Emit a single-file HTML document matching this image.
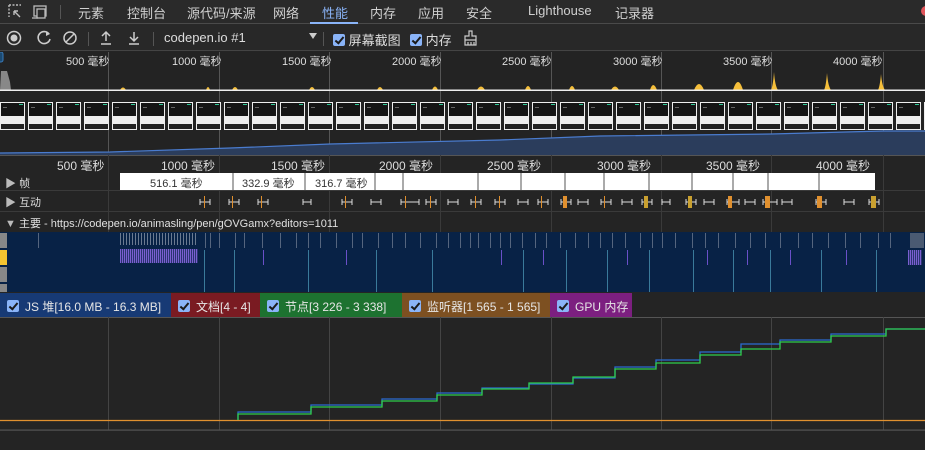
<!DOCTYPE html>
<html><head><meta charset="utf-8"><style>
*{margin:0;padding:0;box-sizing:border-box}
body{width:925px;height:450px;overflow:hidden;background:#242424;font-family:"Liberation Sans","Noto Sans CJK SC",sans-serif;color:#cfcfcf;position:relative}
.a{position:absolute}
.tabs{left:0;top:0;width:925px;height:24px;background:#2a2a2a;border-bottom:1px solid #4a4a4a}
.tab{top:3px;font-size:13px;color:#d0d0d0}
.tb{left:0;top:24px;width:925px;height:27px;background:#282828;border-bottom:1px solid #444}
.cb{display:inline-block;width:12px;height:12px;background:#8ab4f8;border-radius:2px;position:relative;vertical-align:-1px}
.cb:after{content:"";position:absolute;left:3.5px;top:1px;width:3px;height:7px;border:solid #1a1a1a;border-width:0 2px 2px 0;transform:rotate(40deg)}
.lbl{font-size:11px;color:#ddd;top:53px}
.rl{font-size:12px;color:#ddd;top:157px}
.leg{top:293px;height:24px;font-size:12px;color:#e6e6e6;padding:5px 0 0 7px;white-space:nowrap}
.leg .cb{margin-right:6px}
</style></head><body>
<div class="a tabs"></div>
<svg class="a" style="left:8px;top:4px" width="40" height="16" viewBox="0 0 40 16"><path d="M1 1h12M1 1v12M1 5v0" stroke="#bbb" stroke-width="1.4" stroke-dasharray="2 1.5" fill="none"/><path d="M6 7l6 6M6 7h4M6 7v4" stroke="#bbb" stroke-width="1.4" fill="none"/><rect x="26" y="2" width="12" height="10" fill="none" stroke="#bbb" stroke-width="1.3"/><rect x="29" y="5" width="8" height="9" fill="#2a2a2a" stroke="#bbb" stroke-width="1.3"/><path d="M24 14h6" stroke="#bbb" stroke-width="1.3"/></svg>
<div class="a" style="left:60px;top:5px;width:1px;height:14px;background:#555"></div>
<div class="a tab" style="left:78px">元素</div>
<div class="a tab" style="left:127px">控制台</div>
<div class="a tab" style="left:187px">源代码/来源</div>
<div class="a tab" style="left:273px">网络</div>
<div class="a tab" style="left:322px;color:#8ab4f8">性能</div>
<div class="a" style="left:310px;top:22px;width:48px;height:2px;background:#8ab4f8"></div>
<div class="a tab" style="left:370px">内存</div>
<div class="a tab" style="left:418px">应用</div>
<div class="a tab" style="left:466px">安全</div>
<div class="a tab" style="left:528px">Lighthouse</div>
<div class="a tab" style="left:615px">记录器</div>
<div class="a" style="left:921px;top:6px;width:10px;height:10px;border-radius:5px;background:#e0555b"></div>
<div class="a tb"></div>
<svg class="a" style="left:5px;top:29px" width="140" height="18" viewBox="0 0 140 18"><circle cx="9" cy="9" r="6.5" fill="none" stroke="#ccc" stroke-width="1.5"/><circle cx="9" cy="9" r="3.5" fill="#ccc"/><path d="M44 5A6 6 0 1 0 45 10" fill="none" stroke="#ccc" stroke-width="1.6"/><path d="M41 2l4 3-4 2z" fill="#ccc"/><circle cx="65" cy="9" r="6" fill="none" stroke="#ccc" stroke-width="1.5"/><path d="M61 13l8-8" stroke="#ccc" stroke-width="1.5"/><path d="M101 3v9M97 7l4-4 4 4M96 15h10" stroke="#ccc" stroke-width="1.5" fill="none"/><path d="M129 3v9M125 8l4 4 4-4M124 15h10" stroke="#ccc" stroke-width="1.5" fill="none"/></svg>
<div class="a" style="left:88px;top:32px;width:1px;height:14px;background:#555"></div>
<div class="a" style="left:153px;top:32px;width:1px;height:14px;background:#555"></div>
<div class="a" style="left:164px;top:30px;font-size:13px;color:#ddd">codepen.io #1</div>
<div class="a" style="left:309px;top:33px;width:0;height:0;border-left:4px solid transparent;border-right:4px solid transparent;border-top:6px solid #ccc"></div>
<div class="a" style="left:323px;top:32px;width:1px;height:14px;background:#555"></div>
<div class="a" style="left:333px;top:30px;font-size:13px;color:#ddd"><span class="cb"></span> 屏幕截图</div>
<div class="a" style="left:410px;top:30px;font-size:13px;color:#ddd"><span class="cb"></span> 内存</div>
<svg class="a" style="left:463px;top:30px" width="16" height="16" viewBox="0 0 16 16"><path d="M6 1h3v5h4v4H2V6h4zM2 10v5h11v-5M5 12v3M8 12v3M11 12v3" fill="none" stroke="#ccc" stroke-width="1.2"/></svg>
<!-- overview -->
<svg class="a" style="left:0;top:52px" width="925" height="103">
<defs><pattern id="film" x="-1" y="50" width="28" height="29" patternUnits="userSpaceOnUse"><rect x="1" y="0" width="25" height="28" fill="#eee"/><rect x="2" y="1" width="23" height="13" fill="#151515"/><rect x="2" y="22" width="23" height="5" fill="#222"/><rect x="20" y="2" width="4" height="1" fill="#3c9"/><rect x="4" y="5" width="4" height="1" fill="#666"/></pattern></defs>
<rect width="925" height="103" fill="#232323"/>
<g stroke="#555" stroke-width="1"><path d="M108.5 0V103M219.5 0V103M329.5 0V103M440.5 0V103M551.5 0V103M661.5 0V103M771.5 0V103M883.5 0V103"/></g>
<rect x="-4" y="0" width="7" height="10" rx="2" fill="#1b4a72" stroke="#3a7ab8"/>
<path d="M0 38L1 19 7 19 10 30 11 38z" fill="#888"/>
<g fill="#f4be3a"><path d="M120 38q3-5 6 0z"/><path d="M206 38q2-6 4 0z"/><path d="M232 38q3-6 6 0z"/><path d="M309 38q3-6 6 0z"/><path d="M377 38q3-6 6 0z"/><path d="M432 38q3-7 6 0z"/><path d="M477 38q4-7 8 0z"/><path d="M525 38q3-8 6 0z"/><path d="M569 38q3-8 6 0z"/><path d="M611 38q4-7 8 0z"/><path d="M650 38q3-10 7 0z"/><path d="M694 38q5-12 10 0z"/><path d="M733 38q5-16 10 0z"/><path d="M771 38q2-4 3-18q1 14 4 18z"/><path d="M824 38q2-4 3-17q1 13 4 17z"/><path d="M878 38q2-4 3-16q1 12 4 16z"/></g>
<rect x="0" y="37.5" width="925" height="1.5" fill="#eee"/>
<rect x="0" y="50" width="925" height="29" fill="url(#film)"/>
<path d="M0 103V101L110 100 230 96 330 92 500 88 600 84 771 82 883 79 925 79V103z" fill="#2b3d5c"/>
<path d="M0 101L110 100 230 96 330 92 500 88 600 84 771 82 883 79 925 79" fill="none" stroke="#4a7ccf" stroke-width="1.2"/>
</svg>
<div class="a lbl" style="left:66px">500 毫秒</div>
<div class="a lbl" style="left:172px">1000 毫秒</div>
<div class="a lbl" style="left:282px">1500 毫秒</div>
<div class="a lbl" style="left:392px">2000 毫秒</div>
<div class="a lbl" style="left:502px">2500 毫秒</div>
<div class="a lbl" style="left:613px">3000 毫秒</div>
<div class="a lbl" style="left:723px">3500 毫秒</div>
<div class="a lbl" style="left:833px">4000 毫秒</div>
<!-- details -->
<svg class="a" style="left:0;top:155px" width="925" height="138">
<defs><pattern id="bars" width="3" height="12" patternUnits="userSpaceOnUse"><rect width="1" height="12" fill="#6b7a90"/></pattern><pattern id="pbars" width="2" height="14" patternUnits="userSpaceOnUse"><rect width="1.3" height="14" fill="#7a5fd0"/></pattern></defs>
<rect width="925" height="138" fill="#242424"/>
<rect y="0" width="925" height="1" fill="#555"/>
<g stroke="#3a3a3a"><path d="M108.5 0V77M219.5 0V77M329.5 0V77M440.5 0V77M551.5 0V77M661.5 0V77M771.5 0V77M883.5 0V77"/></g>
<rect x="120" y="18" width="755" height="17" fill="#fff"/>
<g stroke="#555"><path d="M233 18v17M305 18v17M375 18v17M403 18v17M478 18v17M521 18v17M565 18v17M604 18v17M649 18v17M692 18v17M733 18v17M768 18v17M819 18v17"/></g>
<rect y="35" width="925" height="1" fill="#3a3a3a"/>
<rect y="56" width="925" height="1" fill="#3a3a3a"/>
<rect y="77" width="925" height="1" fill="#3a3a3a"/>
<g stroke="#ddd" stroke-width="1"><path d="M200 47h10M200 44v6M210 44v6M229 47h10M229 44v6M239 44v6M258 47h10M258 44v6M268 44v6M303 47h8M303 44v6M311 44v6M342 47h10M342 44v6M352 44v6M371 47h10M371 44v6M381 44v6M401 47h18M401 44v6M419 44v6M426 47h10M426 44v6M436 44v6M448 47h10M448 44v6M458 44v6M471 47h10M471 44v6M481 44v6M495 47h10M495 44v6M505 44v6M518 47h10M518 44v6M528 44v6M538 47h10M538 44v6M548 44v6M561 47h10M561 44v6M571 44v6M578 47h10M578 44v6M588 44v6M601 47h10M601 44v6M611 44v6M622 47h10M622 44v6M632 44v6M642 47h10M642 44v6M652 44v6M662 47h8M662 44v6M670 44v6M686 47h10M686 44v6M696 44v6M704 47h10M704 44v6M714 44v6M727 47h12M727 44v6M739 44v6M745 47h10M745 44v6M755 44v6M763 47h14M763 44v6M777 44v6M782 47h10M782 44v6M792 44v6M816 47h10M816 44v6M826 44v6M844 47h10M844 44v6M854 44v6M869 47h10M869 44v6M879 44v6"/></g>
<g fill="#e0902f"><rect x="204" y="41" width="1" height="12"/><rect x="232" y="41" width="1" height="12"/><rect x="261" y="41" width="1" height="12"/><rect x="345" y="41" width="1" height="12"/><rect x="405" y="41" width="1" height="12"/><rect x="430" y="41" width="1" height="12"/><rect x="475" y="41" width="1" height="12"/><rect x="499" y="41" width="1" height="12"/><rect x="541" y="41" width="1" height="12"/><rect x="563" y="41" width="4" height="12"/><rect x="604" y="41" width="1" height="12"/><rect x="644" y="41" width="4" height="12" fill="#c9a030"/><rect x="688" y="41" width="4" height="12" fill="#c9a030"/><rect x="728" y="41" width="4" height="12"/><rect x="765" y="41" width="5" height="12"/><rect x="817" y="41" width="5" height="12"/><rect x="871" y="41" width="5" height="12" fill="#c9a030"/></g>
<rect x="0" y="77" width="925" height="60" fill="#082246"/>
<rect x="0" y="78" width="7" height="15" fill="#888"/><rect x="0" y="95" width="7" height="15" fill="#f4c430"/><rect x="0" y="112" width="7" height="15" fill="#888"/><rect x="0" y="129" width="7" height="8" fill="#888"/>
<rect x="120" y="78" width="78" height="12" fill="url(#bars)"/>
<rect x="120" y="94" width="78" height="14" fill="url(#pbars)"/>
<g fill="#55657e"><rect x="38" y="78" width="1" height="15"/><rect x="205" y="78" width="1" height="15"/><rect x="210" y="78" width="1" height="15"/><rect x="219" y="78" width="1" height="15"/><rect x="235" y="78" width="1" height="15"/><rect x="244" y="78" width="1" height="15"/><rect x="262" y="78" width="1" height="15"/><rect x="280" y="78" width="1" height="15"/><rect x="296" y="78" width="1" height="15"/><rect x="308" y="78" width="1" height="15"/><rect x="320" y="78" width="1" height="15"/><rect x="336" y="78" width="1" height="15"/><rect x="352" y="78" width="1" height="15"/><rect x="362" y="78" width="1" height="15"/><rect x="378" y="78" width="1" height="15"/><rect x="392" y="78" width="1" height="15"/><rect x="405" y="78" width="1" height="15"/><rect x="420" y="78" width="1" height="15"/><rect x="436" y="78" width="1" height="15"/><rect x="448" y="78" width="1" height="15"/><rect x="460" y="78" width="1" height="15"/><rect x="470" y="78" width="1" height="15"/><rect x="478" y="78" width="1" height="15"/><rect x="490" y="78" width="1" height="15"/><rect x="500" y="78" width="1" height="15"/><rect x="510" y="78" width="1" height="15"/><rect x="522" y="78" width="1" height="15"/><rect x="535" y="78" width="1" height="15"/><rect x="546" y="78" width="1" height="15"/><rect x="560" y="78" width="1" height="15"/><rect x="575" y="78" width="1" height="15"/><rect x="588" y="78" width="1" height="15"/><rect x="600" y="78" width="1" height="15"/><rect x="612" y="78" width="1" height="15"/><rect x="625" y="78" width="1" height="15"/><rect x="640" y="78" width="1" height="15"/><rect x="652" y="78" width="1" height="15"/><rect x="662" y="78" width="1" height="15"/><rect x="675" y="78" width="1" height="15"/><rect x="692" y="78" width="1" height="15"/><rect x="705" y="78" width="1" height="15"/><rect x="718" y="78" width="1" height="15"/><rect x="735" y="78" width="1" height="15"/><rect x="750" y="78" width="1" height="15"/><rect x="765" y="78" width="1" height="15"/><rect x="780" y="78" width="1" height="15"/><rect x="798" y="78" width="1" height="15"/><rect x="812" y="78" width="1" height="15"/><rect x="828" y="78" width="1" height="15"/><rect x="845" y="78" width="1" height="15"/><rect x="860" y="78" width="1" height="15"/><rect x="878" y="78" width="1" height="15"/><rect x="890" y="78" width="1" height="15"/><rect x="910" y="78" width="14" height="15" fill="#4a5a72"/></g>
<g fill="#3a7a9a"><rect x="204" y="95" width="1" height="42"/><rect x="234" y="95" width="1" height="42"/><rect x="308" y="95" width="1" height="42"/><rect x="376" y="95" width="1" height="42"/><rect x="432" y="95" width="1" height="42"/><rect x="523" y="95" width="1" height="42"/><rect x="566" y="95" width="1" height="42"/><rect x="607" y="95" width="1" height="42"/><rect x="649" y="95" width="1" height="42"/><rect x="693" y="95" width="1" height="42"/><rect x="733" y="95" width="1" height="42"/><rect x="770" y="95" width="1" height="42"/><rect x="821" y="95" width="1" height="42"/><rect x="876" y="95" width="1" height="42"/></g>
<g fill="#6a50c8"><rect x="263" y="95" width="1" height="15"/><rect x="346" y="95" width="1" height="15"/><rect x="501" y="95" width="1" height="15"/><rect x="543" y="95" width="1" height="15"/><rect x="627" y="95" width="1" height="15"/><rect x="707" y="95" width="1" height="15"/><rect x="747" y="95" width="1" height="15"/><rect x="790" y="95" width="1" height="15"/><rect x="846" y="95" width="1" height="15"/><rect x="908" y="95" width="14" height="15" fill="url(#pbars)"/></g>
</svg>
<div class="a rl" style="left:57px">500 毫秒</div>
<div class="a rl" style="left:161px">1000 毫秒</div>
<div class="a rl" style="left:271px">1500 毫秒</div>
<div class="a rl" style="left:379px">2000 毫秒</div>
<div class="a rl" style="left:487px">2500 毫秒</div>
<div class="a rl" style="left:597px">3000 毫秒</div>
<div class="a rl" style="left:706px">3500 毫秒</div>
<div class="a rl" style="left:816px">4000 毫秒</div>
<div class="a" style="left:5px;top:175px;font-size:11px;color:#bbb">▶ <span style="color:#ddd">帧</span></div>
<div class="a" style="left:5px;top:194px;font-size:11px;color:#bbb">▶ <span style="color:#ddd">互动</span></div>
<div class="a" style="left:5px;top:215px;font-size:11px;color:#bbb">▼ <span style="color:#e0e0e0">主要 - https://codepen.io/animasling/pen/gOVGamx?editors=1011</span></div>
<div class="a" style="left:150px;top:175px;font-size:11px;color:#333">516.1 毫秒</div>
<div class="a" style="left:242px;top:175px;font-size:11px;color:#333">332.9 毫秒</div>
<div class="a" style="left:315px;top:175px;font-size:11px;color:#333">316.7 毫秒</div>
<!-- legend -->
<div class="a leg" style="left:0;width:171px;background:#173a75"><span class="cb"></span>JS 堆[16.0 MB - 16.3 MB]</div>
<div class="a leg" style="left:171px;width:89px;background:#7a1b22"><span class="cb"></span>文档[4 - 4]</div>
<div class="a leg" style="left:260px;width:142px;background:#1d7230"><span class="cb"></span>节点[3 226 - 3 338]</div>
<div class="a leg" style="left:402px;width:148px;background:#7d5021"><span class="cb"></span>监听器[1 565 - 1 565]</div>
<div class="a leg" style="left:550px;width:82px;background:#7c1f80"><span class="cb"></span>GPU 内存</div>
<svg class="a" style="left:0;top:317px" width="925" height="133">
<rect width="925" height="133" fill="#242424"/>
<rect y="0" width="925" height="1" fill="#555"/>
<g stroke="#444"><path d="M108.5 0V113M219.5 0V113M329.5 0V113M440.5 0V113M551.5 0V113M661.5 0V113M771.5 0V113M883.5 0V113"/></g>
<rect y="112.5" width="925" height="1.2" fill="#555"/>
<path d="M238 103V95H311V88H382V82H437V76H482V71H529V67H573V61H615V50H656V43H700V35H741V27H780V23H831V17H886V12H925" fill="none" stroke="#2a6ad0" stroke-width="1.3"/>
<path d="M0 103.5H925" stroke="#e0902f" stroke-width="1.3"/>
<path d="M238 103V97H311V90H382V84H437V78H482V72H529V66H573V60H615V52H656V46H700V38H741V32H780V25H831V19H886V12H925" fill="none" stroke="#2fce4a" stroke-width="1.3"/>
</svg>
</body></html>
